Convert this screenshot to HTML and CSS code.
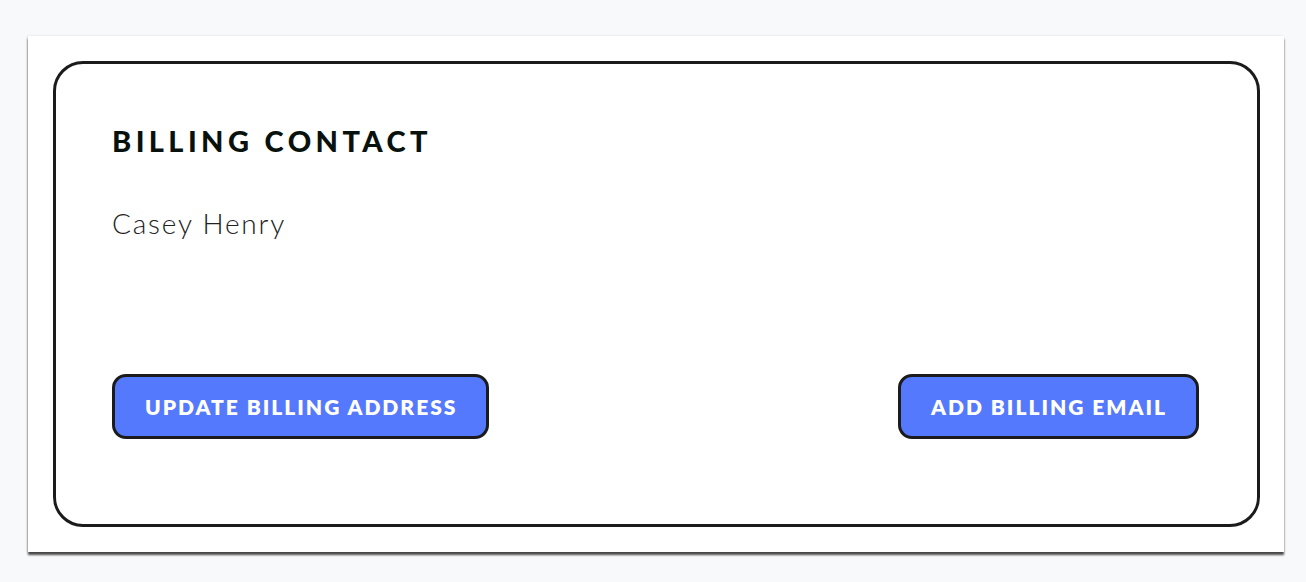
FILE: index.html
```html
<!DOCTYPE html>
<html>
<head>
<meta charset="utf-8">
<link rel="stylesheet" href="styles.css">
</head>
<body>
<div class="panel">
  <section class="card">
    <h2 class="title">BILLING CONTACT</h2>
    <p class="name">Casey Henry</p>
    <div class="actions">
      <button class="btn">UPDATE BILLING ADDRESS</button>
      <button class="btn">ADD BILLING EMAIL</button>
    </div>
  </section>
</div>
</body>
</html>
```
FILE: styles.css
```css
html, body {
  margin: 0;
  padding: 0;
  background: #f8f9fb;
}
body {
  padding: 36px 22px 20px 28px;
  font-family: Lato, "Liberation Sans", sans-serif;
}
.panel {
  position: relative;
  background: #ffffff;
  padding: 25px 24px 25px 25px;
  box-shadow: 0 3px 2px rgba(0, 0, 0, 0.7), -1px 0 2px rgba(0, 0, 0, 0.12);
}
.card {
  box-sizing: border-box;
  height: 466px;
  border: 3px solid #1b1b1b;
  border-radius: 30px;
  padding: 60px 58px 85px 56px;
  display: flex;
  flex-direction: column;
}
.title {
  margin: 0;
  font-size: 29px;
  line-height: 34px;
  font-weight: 900;
  color: #07110d;
  letter-spacing: 4.4px;
}
.name {
  margin: 48px 0 0 0;
  font-size: 28px;
  line-height: 34px;
  font-weight: 300;
  color: #222;
  letter-spacing: 1.8px;
}
.actions {
  margin-top: auto;
  display: flex;
  justify-content: space-between;
  align-items: center;
}
.btn {
  box-sizing: border-box;
  height: 65px;
  padding: 0 29px 0 30px;
  border: 3px solid #1b1b1b;
  border-radius: 14px;
  background: #5579fd;
  color: #ffffff;
  font-family: Lato, "Liberation Sans", sans-serif;
  font-size: 21px;
  font-weight: 800;
  letter-spacing: 2px;
  cursor: pointer;
}
```
